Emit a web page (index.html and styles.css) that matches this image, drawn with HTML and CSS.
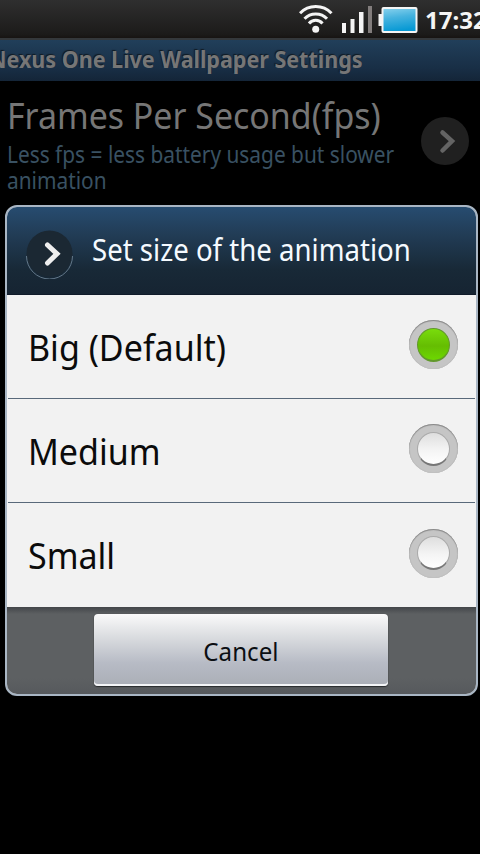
FILE: index.html
```html
<!DOCTYPE html>
<html lang="en">
<head>
<meta charset="utf-8">
<title>Nexus One Live Wallpaper Settings</title>
<link rel="stylesheet" href="styles.css">
</head>
<body>
<div class="screen">
  <header class="status">
    <svg class="status-icons" width="120" height="36" viewBox="0 0 120 36" aria-hidden="true">
      <defs>
        <linearGradient id="battery" x1="0" y1="0" x2="0.2" y2="1">
          <stop offset="0" stop-color="#8bd3ee"/><stop offset="0.45" stop-color="#46b3df"/><stop offset="1" stop-color="#0799d4"/>
        </linearGradient>
      </defs>
      <g fill="none" stroke="#f4f4f4" stroke-width="3">
        <path d="M1 13.300C9.500 4.300 24 4.300 32.500 13.300"/>
        <path d="M5.500 18.800C11.500 12.300 22 12.300 28 18.800"/>
        <path d="M10 23.500C13.500 19.300 20 19.300 23.500 23.500"/>
      </g>
      <circle cx="16.700" cy="29.300" r="3.500" fill="#f4f4f4"/>
      <path d="M43 23h4v10h-4zM51.500 19h4v14h-4zM60 12h4.500v21h-4.500z" fill="#f4f4f4"/>
      <path d="M69 6h4v27h-4z" fill="#827d7c"/>
      <path d="M79.500 14h4v12h-4z" fill="#f4f4f4"/>
      <rect x="83.500" y="8" width="34" height="24" rx="1" fill="url(#battery)" stroke="#f4f4f4" stroke-width="2"/>
    </svg>
    <span class="clock">17:32</span>
  </header>
  <div class="titlebar"><h1 class="app-title">Nexus One Live Wallpaper Settings</h1></div>
  <section class="preference">
    <div class="preference-text">
      <div class="preference-title">Frames Per Second(fps)</div>
      <div class="summary">Less fps = less battery usage but slower<br>animation</div>
    </div>
    <svg class="more" width="48" height="48" viewBox="0 0 48 48" aria-hidden="true">
      <circle cx="24" cy="24" r="24" fill="#202020"/>
      <path d="M21.500 15.500L31 24L21.500 33.500" fill="none" stroke="#646464" stroke-width="4.500" stroke-linecap="round"/>
    </svg>
  </section>
  <section class="dialog" role="dialog">
    <header class="dialog-head">
      <svg class="dialog-icon" width="50" height="50" viewBox="0 0 50 50" aria-hidden="true">
        <circle cx="24.500" cy="24.500" r="23" fill="#1b2833"/>
        <path d="M1.500 27A23 23 0 0 0 47.500 27" fill="none" stroke="#63788a" stroke-width="1"/>
        <path d="M22.500 16L32 24.800L22.500 34" fill="none" stroke="#eee" stroke-width="5" stroke-linecap="round"/>
      </svg>
      <h2 class="dialog-title">Set size of the animation</h2>
    </header>
    <div class="options">
      <div class="option"><span class="label">Big (Default)</span><i class="radio checked"></i></div>
      <div class="option"><span class="label">Medium</span><i class="radio"></i></div>
      <div class="option"><span class="label">Small</span><i class="radio"></i></div>
    </div>
    <footer class="actions"><button class="cancel"><span class="cancel-label">Cancel</span></button></footer>
  </section>
</div>
</body>
</html>
```
FILE: styles.css
```css
* { box-sizing: border-box; }
body { margin: 0; background: #000; font-family: "Noto Sans", sans-serif; }
h1, h2 { margin: 0; font-weight: 400; }
.screen { width: 480px; height: 854px; overflow: hidden; background: #000; }
.status { display: flex; height: 40px; padding-left: 299px; background: linear-gradient(#2f2f2f, #1c1b1a 90%, #171412); border-bottom: 2px solid #34383b; }
.status-icons { flex: none; }
.clock { flex: none; margin-left: 6px; font-size: 24px; font-weight: 700; line-height: 40px; color: #f5f5f5; }
.titlebar { height: 41px; overflow: hidden; background: linear-gradient(#213f5a, #182e45 70%, #142538); }
.app-title { width: max-content; margin-left: -11px; font-size: 23px; font-weight: 700; line-height: 39px; color: #767676; text-shadow: -1px -1px 1px #111a22; white-space: nowrap; transform: scaleX(.935); transform-origin: left; }
.preference { display: flex; justify-content: space-between; height: 124px; padding: 10px 11px 0 7px; }
.preference-text { width: 400px; white-space: nowrap; }
.preference-title { width: max-content; font-size: 36px; line-height: 50px; color: #767676; transform: scaleX(.942); transform-origin: left; }
.summary { width: max-content; font-size: 23px; line-height: 26px; color: #395162; transform: scaleX(.907); transform-origin: left; }
.more { flex: none; margin-top: 26px; }
.dialog { width: 473px; height: 491px; margin-left: 5px; overflow: hidden; border: 2px solid #a9b6c4; border-radius: 12px; background: #f2f2f2; }
.dialog-head { display: flex; height: 88px; padding: 22px 0 0 18px; background: linear-gradient(#274c70, #223d57 30%, #182937 72%, #162432); border-bottom: 1px solid #101b2a; }
.dialog-icon { flex: none; }
.dialog-title { flex: none; margin-left: 16.5px; font-size: 30px; line-height: 42px; color: #f5faff; white-space: nowrap; transform: scaleX(.92); transform-origin: left; }
.option { display: flex; align-items: center; justify-content: space-between; height: 104px; margin: 0 1px; padding: 0 17px 4px 20px; border-bottom: 1px solid #59697a; }
.option:last-child { border-bottom: 0; }
.label { margin-top: 6px; font-size: 36px; line-height: 50px; color: #0b0b0b; white-space: nowrap; transform: scaleX(.945); transform-origin: left; }
.radio { display: grid; place-items: center; width: 49px; height: 49px; border-radius: 50%; background: #c5c5c5; box-shadow: inset 0 1px 1px #858585, inset 0 0 1px #999; }
.radio::before { content: ""; width: 31px; height: 31px; border: 1px solid #aaa; border-bottom: 2px solid #777; border-radius: 50%; background: linear-gradient(#dedede, #f4f4f4 55%, #fff); }
.radio.checked::before { border-color: #62992c; background: linear-gradient(#79dc0c, #65bd02 55%, #6dd800); }
.actions { height: 89px; padding: 7px 0 0 87px; background: linear-gradient(#434649, #5d6062 8%, #5d6062 80%, #55585c); }
.cancel { display: block; width: 294px; height: 72px; padding: 2px 1px 0 0; border: 0; border-radius: 4px; background: linear-gradient(#fafafa, #dcdee1 30%, #b7bbc5 68%, #aaaeb6); box-shadow: inset 0 -2px #f4f5f7, 0 1px 1px #292b2d, 0 0 1px #444; font-family: inherit; }
.cancel-label { display: inline-block; font-size: 25px; line-height: 34px; color: #0b0e12; transform: scaleX(.965); }
```
